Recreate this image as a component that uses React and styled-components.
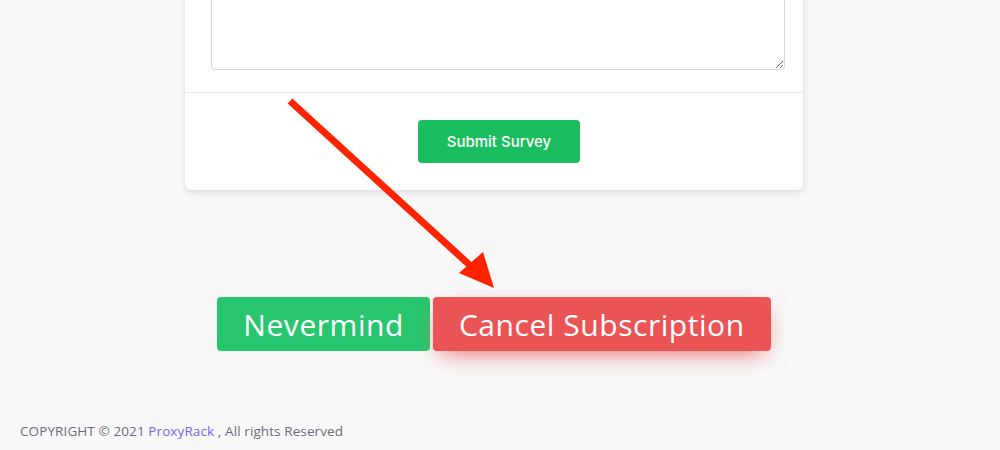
import React from "react"
import styled, { createGlobalStyle } from "styled-components"

const GlobalStyle = createGlobalStyle`
    html, body {
        margin: 0;
        padding: 0;
        background: #f8f8f8;
    }
    body {
        font-family: "Open Sans", "Liberation Sans", sans-serif;
        color: #6e6b7b;
    }
`

export default function App() {
    return (
        <Page>
            <GlobalStyle />
            <Column>
                <Card>
                    <CardBody>
                        <TextArea />
                    </CardBody>
                    <CardFooter>
                        <SubmitButton>Submit Survey</SubmitButton>
                    </CardFooter>
                </Card>
                <Actions>
                    <BigButton $variant="success">Nevermind</BigButton>
                    <BigButton $variant="danger">Cancel Subscription</BigButton>
                </Actions>
            </Column>
            <Footer>
                COPYRIGHT © 2021 <a href="#">ProxyRack</a> , All rights Reserved
            </Footer>
            <Arrow viewBox="0 0 1000 450" aria-hidden="true">
                <line x1="290" y1="101" x2="474" y2="269" stroke="#ff2300" strokeWidth="7" />
                <polygon points="459,273 483,252 494,288" fill="#ff2300" />
            </Arrow>
        </Page>
    )
}

const Page = styled.div`
    position: relative;
    width: 1000px;
    height: 450px;
    overflow: hidden;
    background: #f8f8f8;
`

const Column = styled.div`
    width: 618px;
    margin-left: 185px;
    display: flex;
    flex-direction: column;
    align-items: center;
`

const Card = styled.div`
    width: 100%;
    margin-top: -40px;
    background: #fff;
    border-radius: 6px;
    box-shadow: 0 2px 6px rgba(34, 41, 47, 0.14);
`

const CardBody = styled.div`
    padding: 0 18px 22px 26px;
`

const TextArea = styled.textarea`
    display: block;
    box-sizing: border-box;
    width: 100%;
    height: 110px;
    border: 1px solid #d8d6de;
    border-radius: 4px;
    background: #fff;
    resize: vertical;
    outline: none;
`

const CardFooter = styled.div`
    border-top: 1px solid #ebe9f1;
    padding: 27px 0 27px 10px;
    display: flex;
    justify-content: center;
`

const SubmitButton = styled.button`
    width: 162px;
    height: 43px;
    border: none;
    border-radius: 4px;
    background: #1abe5e;
    color: #fff;
    font-family: Inter, "Noto Sans", sans-serif;
    font-size: 15px;
    font-weight: 500;
    cursor: pointer;
`

const Actions = styled.div`
    margin-top: 107px;
    display: flex;
    gap: 3px;
`

const BigButton = styled.button`
    height: 54px;
    padding: 0 26px;
    border: none;
    border-radius: 4px;
    color: #fff;
    font-family: "Open Sans", "Liberation Sans", sans-serif;
    font-size: 30px;
    font-weight: 400;
    letter-spacing: 0.55px;
    cursor: pointer;
    background: ${p => p.$variant === "danger" ? "#ea5455" : "#28c76f"};
    box-shadow: ${p => p.$variant === "danger" ? "0 8px 25px -8px #ea5455" : "none"};
`

const Footer = styled.p`
    margin: 71px 0 0 20px;
    font-family: "Open Sans", "Liberation Sans", sans-serif;
    font-size: 13.5px;
    color: #6e6b7b;
    letter-spacing: 0.1px;

    a {
        color: #7367f0;
        text-decoration: none;
    }
`

const Arrow = styled.svg`
    position: absolute;
    left: 0;
    top: 0;
    width: 1000px;
    height: 450px;
    pointer-events: none;
`
